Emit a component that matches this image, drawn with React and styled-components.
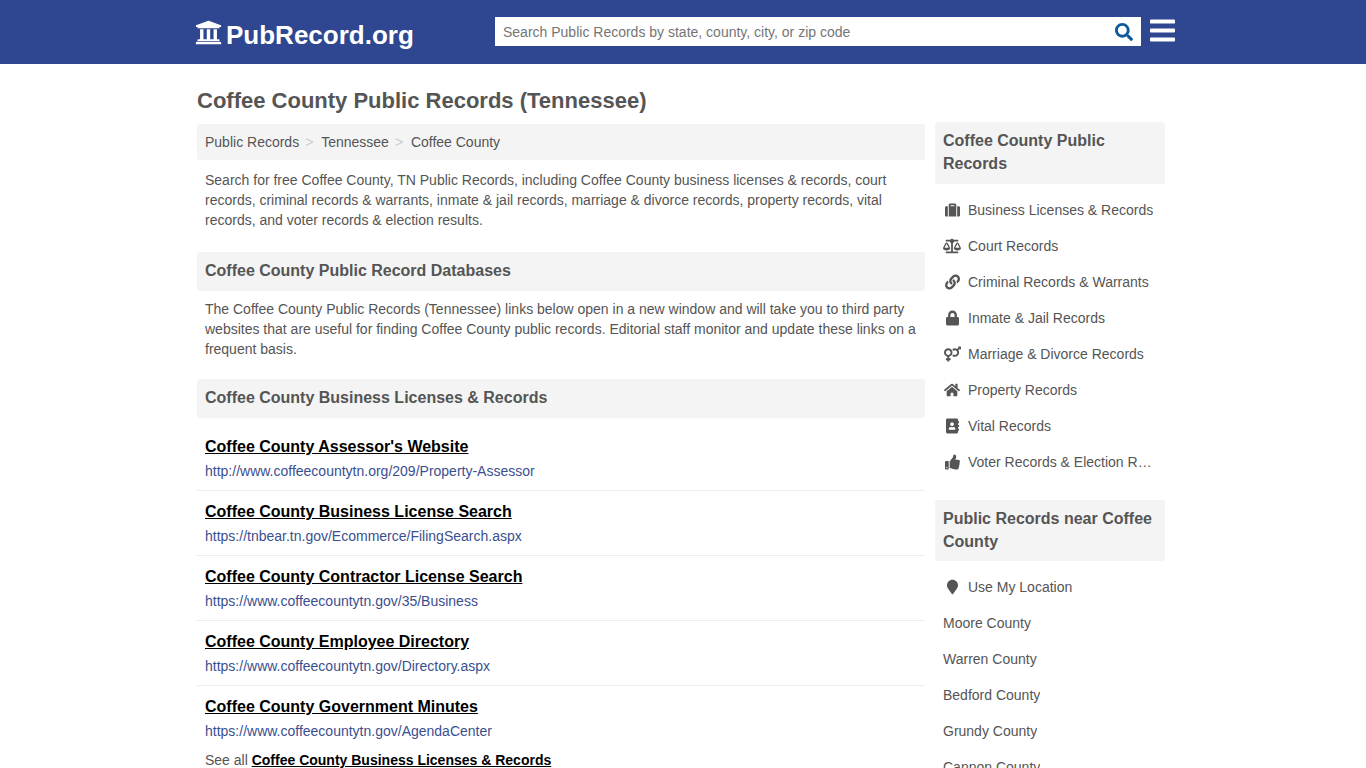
import React from "react";
import styled, { createGlobalStyle } from "styled-components";
import {
  FaUniversity, FaSearch, FaBars, FaSuitcase, FaBalanceScale, FaLink, FaLock,
  FaVenusMars, FaHome, FaAddressBook, FaThumbsUp, FaMapMarker,
} from "react-icons/fa";

const Global = createGlobalStyle`
  html, body { margin: 0; padding: 0; background: #fff; overflow-x: hidden; }
  body { font-family: "Liberation Sans", Arial, sans-serif; font-size: 14px; line-height: 20px; color: #555; }
  * { box-sizing: border-box; }
`;

const Header = styled.header`
  background: #2f4790;
  height: 64px;
`;
const HeaderInner = styled.div`
  width: 986px;
  margin: 0 auto;
  padding-left: 5px;
  display: flex;
  align-items: flex-start;
`;
const Logo = styled.a`
  display: flex;
  align-items: center;
  width: 300px;
  height: 64px;
  color: #fff;
  font-size: 26px;
  font-weight: 700;
  text-decoration: none;
  gap: 4px;
  padding-top: 5px;
  svg { width: 27px; height: 27px; margin-top: -4px; flex: none; }
`;
const SearchBox = styled.form`
  margin-top: 17px;
  width: 646px;
  height: 29px;
  background: #fff;
  display: flex;
  align-items: center;
  justify-content: space-between;
  padding: 0 7px 0 8px;
`;
const SearchInput = styled.input`
  border: 0;
  outline: 0;
  flex: 1;
  font: 14px "Liberation Sans", Arial, sans-serif;
  padding: 0;
  color: #555;
  &::placeholder { color: #757575; opacity: 1; }
`;
const SearchIcon = styled(FaSearch)`
  width: 18px;
  height: 18px;
  margin-right: 1px;
  color: #0f5a9c;
`;
const Menu = styled(FaBars)`
  width: 25px;
  height: 29px;
  margin: 16px 0 0 9px;
  color: #fff;
`;

const Page = styled.div`
  width: 972px;
  padding-right: 4px;
  margin: 0 auto;
`;
const Title = styled.h1`
  margin: 0;
  padding-top: 24px;
  height: 60px;
  font-size: 22px;
  line-height: 26px;
  font-weight: 700;
  color: #555;
`;
const Columns = styled.div`
  display: flex;
  gap: 10px;
  align-items: flex-start;
`;
const Main = styled.main`
  width: 728px;
`;
const Side = styled.aside`
  width: 230px;
  margin-top: -2px;
`;
const Crumbs = styled.nav`
  background: #f4f4f4;
  height: 36px;
  border-radius: 3px;
  padding: 0 8px;
  display: flex;
  align-items: center;
`;
const Crumb = styled.a`
  color: #555;
`;
const Sep = styled.span`
  color: #ccc;
  width: 22px;
  padding-left: 6px;
`;
const Para = styled.p`
  margin: 0;
  padding: ${(p) => p.$top}px 8px 0;
  height: ${(p) => p.$h}px;
`;
const SectionHead = styled.h2`
  margin: 0;
  background: #f4f4f4;
  height: 39px;
  border-radius: 3px;
  padding: 0 8px;
  font-size: 16px;
  line-height: 37px;
  font-weight: 700;
  color: #555;
`;
const LinkList = styled.div`
  padding-top: 8px;
`;
const LinkRow = styled.div`
  height: 65px;
  padding: 9px 8px 0;
  border-bottom: ${(p) => (p.$last ? "0" : "1px solid #eee")};
`;
const RowTitle = styled.a`
  display: block;
  color: #000;
  font-size: 16px;
  line-height: 24px;
  font-weight: 700;
  text-decoration: underline;
`;
const RowUrl = styled.div`
  color: #3b4f8f;
  line-height: 20px;
  margin-top: 2px;
`;
const SeeAll = styled.div`
  padding: 0 8px;
  margin-top: -1px;
  a { color: #000; font-weight: 700; text-decoration: underline; }
`;
const SideHead = styled.h3`
  margin: 0;
  background: #f4f4f4;
  border-radius: 3px;
  padding: 7px 8px 8px;
  font-size: 16px;
  line-height: 23px;
  font-weight: 700;
  color: #555;
  height: ${(p) => p.$h}px;
`;
const SideList = styled.ul`
  list-style: none;
  margin: 8px 0 20px;
  padding: 0;
`;
const SideItem = styled.li`
  height: 36px;
  padding: 0 8px;
  display: flex;
  align-items: center;
  color: #555;
`;
const IconSlot = styled.span`
  width: 18px;
  margin-right: 7px;
  display: flex;
  justify-content: center;
  flex: none;
  svg { width: ${(p) => p.$w}px; height: 16px; flex: none; color: #555; }
`;
const Clip = styled.span`
  white-space: nowrap;
  overflow: hidden;
  text-overflow: ellipsis;
`;

const rows = [
  ["Coffee County Assessor's Website", "http://www.coffeecountytn.org/209/Property-Assessor"],
  ["Coffee County Business License Search", "https://tnbear.tn.gov/Ecommerce/FilingSearch.aspx"],
  ["Coffee County Contractor License Search", "https://www.coffeecountytn.gov/35/Business"],
  ["Coffee County Employee Directory", "https://www.coffeecountytn.gov/Directory.aspx"],
  ["Coffee County Government Minutes", "https://www.coffeecountytn.gov/AgendaCenter"],
];
const records = [
  [FaSuitcase, "Business Licenses & Records", 15],
  [FaBalanceScale, "Court Records", 18],
  [FaLink, "Criminal Records & Warrants", 15],
  [FaLock, "Inmate & Jail Records", 13],
  [FaVenusMars, "Marriage & Divorce Records", 17],
  [FaHome, "Property Records", 16],
  [FaAddressBook, "Vital Records", 13],
  [FaThumbsUp, "Voter Records & Election Results", 15],
];
const near = ["Moore County", "Warren County", "Bedford County", "Grundy County", "Cannon County"];

export default function App() {
  return (
    <>
      <Global />
      <Header>
        <HeaderInner>
          <Logo href="#"><FaUniversity />PubRecord.org</Logo>
          <SearchBox onSubmit={(e) => e.preventDefault()}>
            <SearchInput placeholder="Search Public Records by state, county, city, or zip code" />
            <SearchIcon />
          </SearchBox>
          <Menu />
        </HeaderInner>
      </Header>
      <Page>
        <Title>Coffee County Public Records (Tennessee)</Title>
        <Columns>
          <Main>
            <Crumbs>
              <Crumb>Public Records</Crumb><Sep>&gt;</Sep>
              <Crumb>Tennessee</Crumb><Sep>&gt;</Sep>
              <Crumb>Coffee County</Crumb>
            </Crumbs>
            <Para $top={10} $h={92}>
              Search for free Coffee County, TN Public Records, including Coffee County business licenses &amp; records, court records, criminal records &amp; warrants, inmate &amp; jail records, marriage &amp; divorce records, property records, vital records, and voter records &amp; election results.
            </Para>
            <SectionHead>Coffee County Public Record Databases</SectionHead>
            <Para $top={8} $h={88}>
              The Coffee County Public Records (Tennessee) links below open in a new window and will take you to third party websites that are useful for finding Coffee County public records. Editorial staff monitor and update these links on a frequent basis.
            </Para>
            <SectionHead>Coffee County Business Licenses &amp; Records</SectionHead>
            <LinkList>
              {rows.map(([t, u], i) => (
                <LinkRow key={t} $last={i === rows.length - 1}>
                  <RowTitle>{t}</RowTitle>
                  <RowUrl>{u}</RowUrl>
                </LinkRow>
              ))}
            </LinkList>
            <SeeAll>See all <a>Coffee County Business Licenses &amp; Records</a></SeeAll>
          </Main>
          <Side>
            <SideHead $h={62}>Coffee County Public Records</SideHead>
            <SideList>
              {records.map(([I, t, w]) => (
                <SideItem key={t}>
                  <IconSlot $w={w}><I /></IconSlot>
                  <Clip>{t}</Clip>
                </SideItem>
              ))}
            </SideList>
            <SideHead $h={61}>Public Records near Coffee County</SideHead>
            <SideList>
              <SideItem>
                <IconSlot $w={11}><FaMapMarker /></IconSlot>
                <Clip>Use My Location</Clip>
              </SideItem>
              {near.map((n) => <SideItem key={n}><Clip>{n}</Clip></SideItem>)}
            </SideList>
          </Side>
        </Columns>
      </Page>
    </>
  );
}
